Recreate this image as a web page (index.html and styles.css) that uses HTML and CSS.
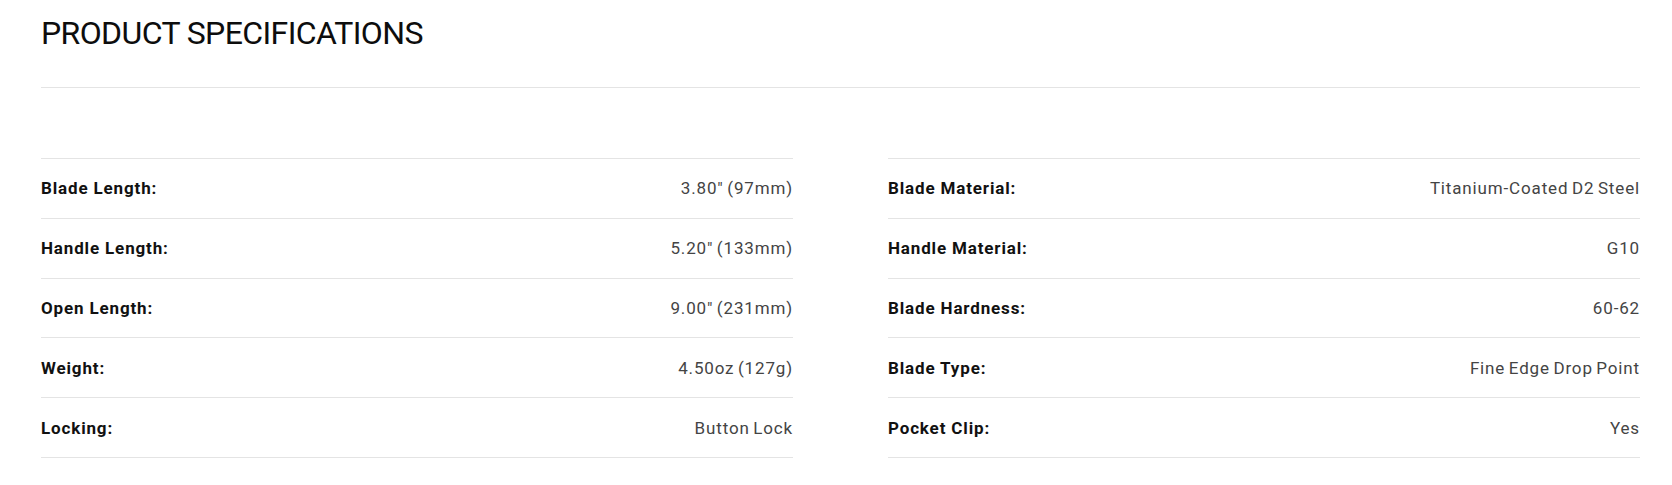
FILE: index.html
```html
<!DOCTYPE html>
<html lang="en">
<head>
<meta charset="utf-8">
<title>Product Specifications</title>
<link rel="stylesheet" href="styles.css">
</head>
<body>
<section class="specs">
  <header class="specs-header">
    <h1 class="specs-title">PRODUCT SPECIFICATIONS</h1>
  </header>
  <div class="specs-grid">
    <dl class="spec-list">
      <div class="spec-row"><dt class="spec-label">Blade Length:</dt><dd class="spec-value">3.80″ (97mm)</dd></div>
      <div class="spec-row"><dt class="spec-label">Handle Length:</dt><dd class="spec-value">5.20" (133mm)</dd></div>
      <div class="spec-row"><dt class="spec-label">Open Length:</dt><dd class="spec-value">9.00" (231mm)</dd></div>
      <div class="spec-row"><dt class="spec-label">Weight:</dt><dd class="spec-value">4.50oz (127g)</dd></div>
      <div class="spec-row"><dt class="spec-label">Locking:</dt><dd class="spec-value">Button Lock</dd></div>
    </dl>
    <dl class="spec-list">
      <div class="spec-row"><dt class="spec-label">Blade Material:</dt><dd class="spec-value">Titanium-Coated D2 Steel</dd></div>
      <div class="spec-row"><dt class="spec-label">Handle Material:</dt><dd class="spec-value">G10</dd></div>
      <div class="spec-row"><dt class="spec-label">Blade Hardness:</dt><dd class="spec-value">60-62</dd></div>
      <div class="spec-row"><dt class="spec-label">Blade Type:</dt><dd class="spec-value">Fine Edge Drop Point</dd></div>
      <div class="spec-row"><dt class="spec-label">Pocket Clip:</dt><dd class="spec-value">Yes</dd></div>
    </dl>
  </div>
</section>
</body>
</html>
```
FILE: styles.css
```css
html, body {
  margin: 0;
  padding: 0;
  background: #ffffff;
}

body {
  font-family: Roboto, "Liberation Sans", Arial, sans-serif;
  color: #111111;
}

.specs {
  padding: 0 32px 0 41px;
}

.specs-header {
  padding: 13px 0 34px;
  border-bottom: 1px solid #e4e4e4;
}

.specs-title {
  margin: 0;
  font-size: 32px;
  line-height: 40px;
  font-weight: 400;
  color: #0d0d0d;
  letter-spacing: -0.6px;
}

.specs-grid {
  margin-top: 70px;
  display: grid;
  grid-template-columns: 1fr 1fr;
  column-gap: 95px;
}

.spec-list {
  margin: 0;
  border-top: 1px solid #e4e4e4;
}

.spec-row {
  display: flex;
  align-items: center;
  justify-content: space-between;
  height: 58.8px;
  border-bottom: 1px solid #e4e4e4;
}

.spec-label {
  margin: 0;
  font-size: 17px;
  font-weight: 700;
  letter-spacing: 0.05em;
  color: #111111;
}

.spec-value {
  margin: 0;
  font-size: 17px;
  font-weight: 400;
  letter-spacing: 0.05em;
  word-spacing: -1.5px;
  color: #444444;
}
```
